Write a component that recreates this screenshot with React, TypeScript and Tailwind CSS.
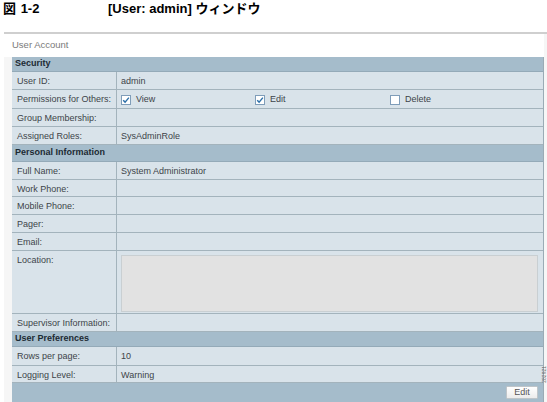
import React from "react";

type Row = { label: string; value?: React.ReactNode; tall?: boolean };

const font = { fontFamily: '"Liberation Sans", Arial, "Noto Sans CJK JP", sans-serif' };

function Check({ checked }: { checked: boolean }) {
    return (
        <span className="inline-flex w-[10px] h-[10px] border border-[#7f9db9] bg-white items-center justify-center">
            {checked && (
                <svg width="8" height="8" viewBox="0 0 8 8">
                    <path d="M1.2 4.2 L3.1 6.1 L6.9 1.6" stroke="#2c6fa8" strokeWidth="1.4" fill="none" />
                </svg>
            )}
        </span>
    );
}

function Header({ title, h }: { title: string; h: string }) {
    return (
        <div className={`${h} bg-[#a5bccb] border-b border-[#94aab8] flex items-center pl-[3px] text-[9px] font-bold text-[#1c2a33]`}>
            {title}
        </div>
    );
}

function Line({ label, value, h = "h-[18px]", children }: { label: string; value?: React.ReactNode; h?: string; children?: React.ReactNode }) {
    return (
        <div className={`${h} flex border-b border-[#a3b3bc] bg-[#d9e3ea] text-[9px] text-[#3d4449]`}>
            <div className="w-[105px] shrink-0 border-r border-[#a3b3bc] pl-[5px] pt-[3px]">{label}</div>
            <div className="flex-1 pl-[4px] pt-[3px]">{children ?? value}</div>
        </div>
    );
}

export default function App() {
    return (
        <div className="relative w-[547px] h-[402px] bg-white overflow-hidden" style={font}>
            {/* タイトル */}
            <div className="flex h-[17px] items-center text-[13px] font-bold text-black">
                <span className="pl-[3px] w-[108px]">
                    図 <span className="ml-[1px]">1-2</span>
                </span>
                <span>[User: admin] ウィンドウ</span>
            </div>
            <div className="mt-[15px] ml-[4px] h-[2px] bg-[#cfcfcf]" />

            <div className="ml-[4px] bg-[#f6f6f6] pl-[8px] pr-[3px] pb-0">
                <div className="bg-white -ml-[8px] pl-[8px] pt-[4px] h-[23px] text-[9.5px] text-[#7a7a7a]">User Account</div>

                <div className="border-r border-[#9aabb5]">
                    <Header title="Security" h="h-[15px]" />
                    <Line label="User ID:" value="admin" />
                    <Line label="Permissions for Others:" h="h-[19px]">
                        <div className="flex items-center">
                            <span className="w-[134px] flex items-center gap-[5px]">
                                <Check checked /> View
                            </span>
                            <span className="w-[135px] flex items-center gap-[5px]">
                                <Check checked /> Edit
                            </span>
                            <span className="flex items-center gap-[5px]">
                                <Check checked={false} /> Delete
                            </span>
                        </div>
                    </Line>
                    <Line label="Group Membership:" />
                    <Line label="Assigned Roles:" value="SysAdminRole" />

                    <Header title="Personal Information" h="h-[17px]" />
                    <Line label="Full Name:" value="System Administrator" />
                    <Line label="Work Phone:" h="h-[17px]" />
                    <Line label="Mobile Phone:" />
                    <Line label="Pager:" />
                    <Line label="Email:" />
                    <Line label="Location:" h="h-[63px]">
                        <div className="mt-[1px] mr-[5px] h-[57px] bg-[#e2e2e2] border border-[#c9cfd2]" />
                    </Line>
                    <Line label="Supervisor Information:" />

                    <Header title="User Preferences" h="h-[15px]" />
                    <Line label="Rows per page:" value="10" h="h-[19px]" />
                    <Line label="Logging Level:" value="Warning" h="h-[17px]" />

                    <div className="h-[19px] bg-[#a5bccb] flex items-center justify-end pr-[5px]">
                        <button className="w-[32px] h-[13px] bg-gradient-to-b from-white to-[#ececec] border border-[#bfc5c9] rounded-[1px] text-[9px] text-[#555] leading-none">
                            Edit
                        </button>
                    </div>
                </div>
            </div>

            <div className="absolute right-[-1px] top-[366px] text-[5px] text-[#666] [writing-mode:vertical-rl] rotate-180">
                282921
            </div>
        </div>
    );
}
